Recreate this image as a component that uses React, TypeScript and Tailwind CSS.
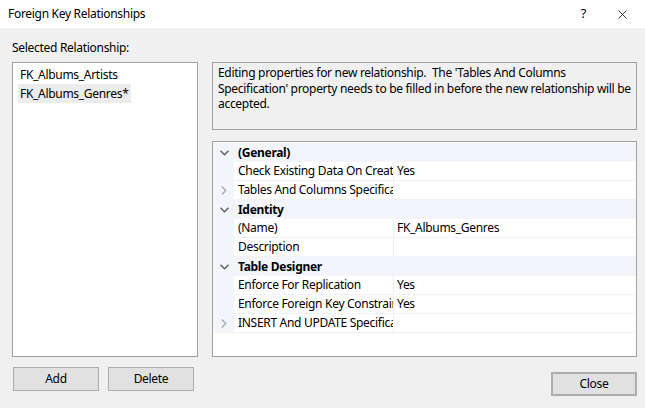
import { X } from "lucide-react";

type Row =
  | { kind: "cat"; label: string }
  | { kind: "prop"; label: string; value?: string; expandable?: boolean };

const rows: Row[] = [
  { kind: "cat", label: "(General)" },
  { kind: "prop", label: "Check Existing Data On Creation Or Re-Enabling", value: "Yes" },
  { kind: "prop", label: "Tables And Columns Specification", expandable: true },
  { kind: "cat", label: "Identity" },
  { kind: "prop", label: "(Name)", value: "FK_Albums_Genres" },
  { kind: "prop", label: "Description", value: "" },
  { kind: "cat", label: "Table Designer" },
  { kind: "prop", label: "Enforce For Replication", value: "Yes" },
  { kind: "prop", label: "Enforce Foreign Key Constraint", value: "Yes" },
  { kind: "prop", label: "INSERT And UPDATE Specification", expandable: true },
];

function ChevronDown() {
  return (
    <svg width="9" height="6" viewBox="0 0 9 6" className="text-[#595959]">
      <polyline points="0.5,0.8 4.5,4.8 8.5,0.8" fill="none" stroke="currentColor" strokeWidth="1.3" />
    </svg>
  );
}

function ChevronRight() {
  return (
    <svg width="6" height="9" viewBox="0 0 6 9" className="text-[#a8a8a8]">
      <polyline points="0.8,0.5 4.8,4.5 0.8,8.5" fill="none" stroke="currentColor" strokeWidth="1.3" />
    </svg>
  );
}

function WinButton({ children, className = "" }: { children: React.ReactNode; className?: string }) {
  return (
    <button
      className={
        "flex h-[24px] w-[86px] shrink-0 items-center justify-center border border-[#adadad] bg-[#e1e1e1] text-[12px] text-black " +
        className
      }
    >
      {children}
    </button>
  );
}

export default function App() {
  return (
    <div
      className="flex h-[408px] w-[645px] flex-col bg-[#f0f0f0] text-[12px] tracking-[-0.3px] text-black"
      style={{ fontFamily: '"Noto Sans", "Open Sans", sans-serif' }}
    >
      <div className="flex h-[28px] shrink-0 items-center bg-white pl-[8px] pr-[15px]">
        <span className="flex-1">Foreign Key Relationships</span>
        <span className="mr-[29px] text-[13px]">?</span>
        <X size={15} strokeWidth={1.2} />
      </div>

      <div className="flex flex-1 flex-col pl-[12px] pr-[8px]">
        <div className="mt-[12px] h-[16px] leading-[16px]">Selected Relationship:</div>

        <div className="mt-[6px] flex gap-[14px]">
          <div className="flex w-[186px] shrink-0 flex-col">
            <div className="h-[295px] border border-[#a0a0a0] bg-white pl-[5px] pt-[2px]">
              <div className="h-[19px] px-[2px] leading-[19px]">FK_Albums_Artists</div>
              <div className="inline-block h-[19px] bg-[#ececec] px-[2px] leading-[19px]">FK_Albums_Genres*</div>
            </div>
            <div className="mt-[10px] flex gap-[9px] pl-[1px]">
              <WinButton>Add</WinButton>
              <WinButton>Delete</WinButton>
            </div>
          </div>

          <div className="flex w-[425px] shrink-0 flex-col">
            <div className="h-[68px] whitespace-nowrap border border-[#a0a0a0] bg-[#f0f0f0] px-[5px] pt-[2px] leading-[15.5px]">
              Editing properties for new relationship.&nbsp; The 'Tables And Columns
              <br />
              Specification' property needs to be filled in before the new relationship will be
              <br />
              accepted.
            </div>

            <div className="mt-[11px] h-[216px] border border-[#a0a0a0] bg-white pt-[1px]">
              {rows.map((r, i) =>
                r.kind === "cat" ? (
                  <div key={i} className="flex h-[19px] items-center bg-[#f3f5fa]">
                    <div className="flex w-[21px] shrink-0 items-center justify-center pl-[1px]">
                      <ChevronDown />
                    </div>
                    <span className="pl-[4px] font-bold">{r.label}</span>
                  </div>
                ) : (
                  <div key={i} className="flex h-[19px]">
                    <div className="flex w-[21px] shrink-0 items-center justify-center bg-[#f3f5fa]">
                      {r.expandable && <ChevronRight />}
                    </div>
                    <div className="flex flex-1 border-b border-[#f0f2f6]">
                      <div className="w-[160px] shrink-0 overflow-hidden whitespace-nowrap border-r border-[#eceef2] pl-[4px] leading-[18px]">
                        {r.label}
                      </div>
                      <div className="flex-1 pl-[3px] leading-[18px]">{r.value}</div>
                    </div>
                  </div>
                )
              )}
            </div>

            <div className="mt-[15px] flex justify-end">
              <WinButton className="border-2 border-[#0078d7]">Close</WinButton>
            </div>
          </div>
        </div>
      </div>
    </div>
  );
}
